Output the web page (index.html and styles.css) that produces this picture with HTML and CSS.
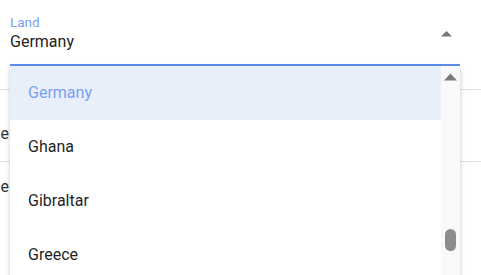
FILE: index.html
```html
<!DOCTYPE html>
<html lang="de">
<head>
<meta charset="utf-8">
<title>Land</title>
<link rel="stylesheet" href="styles.css">
</head>
<body>
<div class="page">
  <div class="field">
    <div class="field-text">
      <div class="label">Land</div>
      <div class="value">Germany</div>
    </div>
    <svg class="arrow" width="11" height="6" viewBox="0 0 11 6"><polygon points="0,5.5 5.5,0 11,5.5" fill="#757575"/></svg>
  </div>
  <div class="table">
    <div class="row row-head"></div>
    <div class="row row-a"><div class="cell">Name e</div></div>
    <div class="row row-b"><div class="cell">Name e</div></div>
  </div>
  <div class="menu">
    <ul class="options">
      <li class="option selected">Germany</li>
      <li class="option">Ghana</li>
      <li class="option">Gibraltar</li>
      <li class="option">Greece</li>
    </ul>
    <div class="scrollbar">
      <svg class="scroll-up" width="13" height="8" viewBox="0 0 13 8"><polygon points="0,7.5 6.5,0.5 13,7.5" fill="#7a7a7a"/></svg>
      <div class="thumb"></div>
    </div>
  </div>
</div>
</body>
</html>
```

FILE: styles.css
```css
html, body {
  margin: 0;
  padding: 0;
  background: #ffffff;
  overflow: hidden;
}

body {
  font-family: Roboto, "Liberation Sans", Arial, sans-serif;
  width: 481px;
  height: 275px;
}

.page {
  position: relative;
  width: 481px;
  height: 275px;
  overflow: hidden;
}

.field {
  margin-left: 10px;
  width: 450px;
  box-sizing: border-box;
  padding: 14px 8px 12px 0;
  border-bottom: 2px solid #5e8ff0;
  display: flex;
  align-items: center;
}

.field-text {
  flex: 1;
}

.label {
  font-size: 13.5px;
  line-height: 17px;
  color: #78a1f4;
}

.value {
  margin-top: 1px;
  font-size: 16px;
  line-height: 20px;
  color: #212121;
}

.arrow {
  display: block;
  margin-top: 1px;
}

.table {
  width: 481px;
}

.row {
  border-bottom: 1px solid #e0e0e0;
}

.row-head {
  height: 23px;
}

.row-a {
  height: 72px;
  box-sizing: border-box;
  padding-top: 33.5px;
}

.row-b {
  height: 80px;
  box-sizing: border-box;
  padding-top: 14.5px;
  border-bottom: none;
}

.cell {
  width: 9px;
  display: flex;
  justify-content: flex-end;
  overflow: hidden;
  white-space: nowrap;
  font-size: 16px;
  line-height: 20px;
  color: #333333;
}

.menu {
  position: absolute;
  top: 66px;
  left: 10px;
  width: 450px;
  height: 260px;
  background: #ffffff;
  box-shadow: 0 2px 5px rgba(0, 0, 0, 0.22);
  display: flex;
}

.options {
  list-style: none;
  margin: 0;
  padding: 0;
  flex: 1;
}

.option {
  height: 54px;
  line-height: 54px;
  padding-left: 18px;
  font-size: 16px;
  color: #1f1f1f;
}

.option.selected {
  background: #e8effb;
  color: #78a1f4;
}

.scrollbar {
  width: 19px;
  background: #f9f9f9;
  display: flex;
  flex-direction: column;
  align-items: center;
  padding-top: 7px;
  box-sizing: border-box;
}

.scroll-up {
  display: block;
}

.thumb {
  margin-top: 148px;
  width: 11px;
  height: 22px;
  border-radius: 6px;
  background: #8c8c8c;
}
```
